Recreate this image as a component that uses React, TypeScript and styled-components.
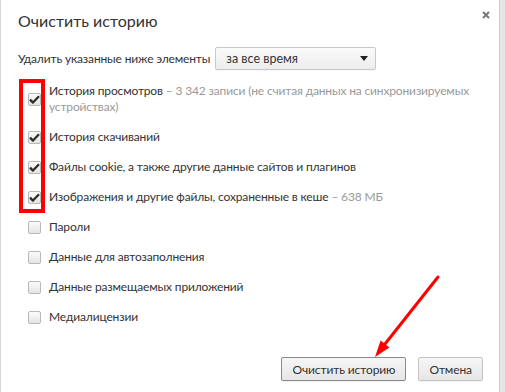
import { FC } from "react";
import styled, { createGlobalStyle } from "styled-components";

const GlobalStyle = createGlobalStyle`
  html, body {
    margin: 0;
    padding: 0;
    background: #e6e6e6;
  }
  body {
    font-family: Lato, "Open Sans", "Liberation Sans", sans-serif;
    color: #333;
  }
`;

const Page = styled.div`
  width: 505px;
  height: 392px;
  display: flex;
  overflow: hidden;
`;

const Dialog = styled.div`
  position: relative;
  width: 500px;
  height: 392px;
  box-sizing: border-box;
  background: #fff;
  border-left: 1px solid #d6d6d6;
  border-right: 1px solid #cfcfcf;
  padding: 11px 7px 0 17px;
  display: flex;
  flex-direction: column;
`;

const Header = styled.div`
  display: flex;
  align-items: flex-start;
  justify-content: space-between;
`;

const Title = styled.h1`
  margin: 0;
  font-size: 16px;
  line-height: 20px;
  font-weight: 400;
  color: #333;
`;

const CloseButton = styled.button`
  margin: -2px 0 0 0;
  padding: 0;
  width: 12px;
  height: 12px;
  border: none;
  background: none;
  display: flex;
  align-items: center;
  justify-content: center;
`;

const RangeRow = styled.div`
  margin-top: 16px;
  display: flex;
  align-items: center;
  gap: 5px;
  font-size: 12px;
  letter-spacing: -0.15px;
`;

const Select = styled.div`
  width: 161px;
  height: 23px;
  box-sizing: border-box;
  padding: 0 7px 0 10px;
  display: flex;
  align-items: center;
  justify-content: space-between;
  border: 1px solid #c8c8c8;
  border-radius: 2px;
  background: linear-gradient(#fafafa, #ededed);
  box-shadow: 0 1px 0 rgba(0, 0, 0, 0.04);
  font-size: 12.5px;
  letter-spacing: 0;
  color: #333;
`;

const Caret = styled.span`
  width: 0;
  height: 0;
  border-left: 4px solid transparent;
  border-right: 4px solid transparent;
  border-top: 5px solid #222;
`;

const List = styled.div`
  position: relative;
  margin-top: 13px;
  display: flex;
  flex-direction: column;
  gap: 14px;
`;

const Highlight = styled.div`
  position: absolute;
  left: 1px;
  top: -4px;
  width: 26px;
  height: 134px;
  box-sizing: border-box;
  border: 4px solid #ff0000;
  pointer-events: none;
`;

const Row = styled.label`
  display: flex;
  align-items: center;
  gap: 8px;
  padding-left: 10px;
  font-size: 12px;
  letter-spacing: -0.15px;
  line-height: 16px;
  color: #333;
`;

const Box = styled.span<{ $checked: boolean }>`
  flex: none;
  width: 13px;
  height: 13px;
  box-sizing: border-box;
  border: 1px solid #b8b8b8;
  border-radius: 2px;
  background: linear-gradient(#fbfbfb, #e4e4e4);
  display: flex;
  align-items: center;
  justify-content: center;
  margin-top: ${(p) => (p.$checked ? "1px" : "0")};
`;

const Detail = styled.span`
  color: #999;
`;

const Footer = styled.div`
  margin-top: 32px;
  padding-right: 9px;
  display: flex;
  justify-content: flex-end;
  gap: 12px;
`;

const Button = styled.button<{ $primary?: boolean }>`
  height: 24px;
  padding: 0 10px;
  font-family: inherit;
  font-size: 12px;
  letter-spacing: -0.1px;
  color: #333;
  border: 1px solid ${(p) => (p.$primary ? "#8a8a8a" : "#c4c4c4")};
  border-radius: 2px;
  background: linear-gradient(#f6f6f6, #e6e6e6);
  box-shadow: 0 1px 0 rgba(0, 0, 0, 0.05);
`;

const Arrow = styled.svg`
  position: absolute;
  left: -1px;
  top: 0;
  width: 505px;
  height: 392px;
  pointer-events: none;
`;

const Check = () => (
  <svg width="11" height="9" viewBox="0 0 11 9">
    <path d="M1 4.6 L4 7.6 L10 1.2" fill="none" stroke="#2b2b2b" strokeWidth="2.2" strokeLinejoin="round" />
  </svg>
);

type Item = { label: string; detail?: string; checked: boolean };

const items: Item[] = [
  {
    label: "История просмотров",
    detail: "  –  3 342 записи (не считая данных на синхронизируемых устройствах)",
    checked: true,
  },
  { label: "История скачиваний", checked: true },
  { label: "Файлы cookie, а также другие данные сайтов и плагинов", checked: true },
  { label: "Изображения и другие файлы, сохраненные в кеше", detail: "  –  638 МБ", checked: true },
  { label: "Пароли", checked: false },
  { label: "Данные для автозаполнения", checked: false },
  { label: "Данные размещаемых приложений", checked: false },
  { label: "Медиалицензии", checked: false },
];

const CheckRow: FC<{ item: Item }> = ({ item }) => (
  <Row>
    <Box $checked={item.checked}>{item.checked && <Check />}</Box>
    <span>
      {item.label}
      {item.detail && <Detail>{item.detail}</Detail>}
    </span>
  </Row>
);

const App = () => {
  return (
    <Page>
      <GlobalStyle />
      <Dialog>
        <Header>
          <Title>Очистить историю</Title>
          <CloseButton aria-label="Закрыть">
            <svg width="8" height="8" viewBox="0 0 8 8">
              <path d="M1 1 L7 7 M7 1 L1 7" stroke="#777" strokeWidth="2" />
            </svg>
          </CloseButton>
        </Header>
        <RangeRow>
          <span>Удалить указанные ниже элементы</span>
          <Select>
            <span>за все время</span>
            <Caret />
          </Select>
        </RangeRow>
        <List>
          {items.map((item) => (
            <CheckRow key={item.label} item={item} />
          ))}
          <Highlight />
        </List>
        <Footer>
          <Button $primary>Очистить историю</Button>
          <Button>Отмена</Button>
        </Footer>
        <Arrow viewBox="0 0 505 392">
          <line x1="438" y1="277" x2="385" y2="344" stroke="#ff0000" strokeWidth="3" strokeLinecap="round" />
          <polygon points="375,357 380.6,340.6 389.4,347.6" fill="#ff0000" />
        </Arrow>
      </Dialog>
    </Page>
  );
};

export default App;
